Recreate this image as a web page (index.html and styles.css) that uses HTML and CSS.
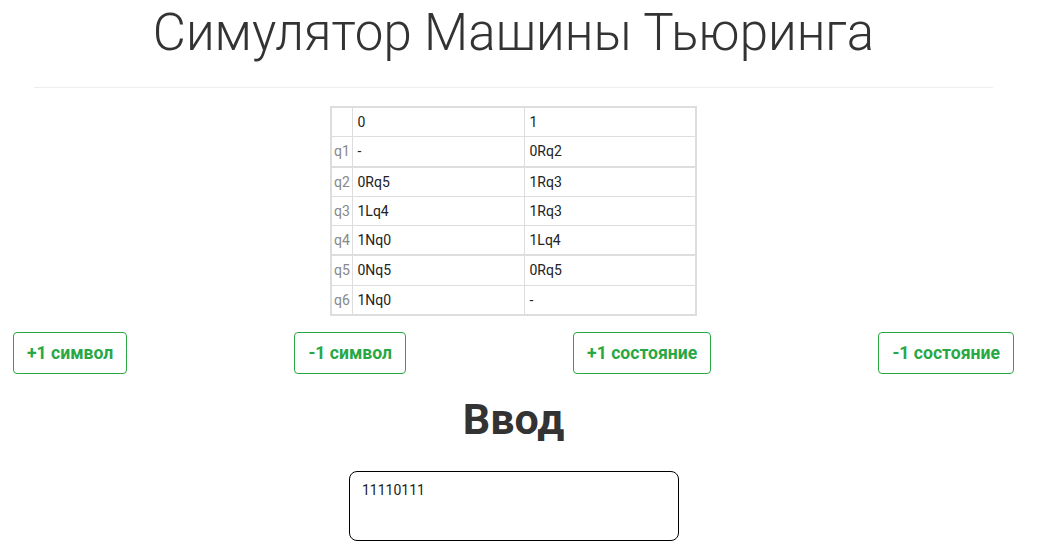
FILE: index.html
```html
<!DOCTYPE html>
<html lang="ru">
<head>
<meta charset="utf-8">
<title>Симулятор Машины Тьюринга</title>
<link rel="stylesheet" href="styles.css">
</head>
<body>
<main class="page">
  <header class="header">
    <h1 class="title">Симулятор Машины Тьюринга</h1>
    <hr class="rule">
  </header>
  <div class="table-wrap">
    <table class="rules">
      <colgroup><col class="c-state"><col class="c-sym"><col class="c-sym"></colgroup>
      <tbody>
        <tr><td class="state"></td><td>0</td><td>1</td></tr>
        <tr><td class="state">q1</td><td>-</td><td>0Rq2</td></tr>
      </tbody>
      <tbody class="group">
        <tr><td class="state">q2</td><td>0Rq5</td><td>1Rq3</td></tr>
        <tr><td class="state">q3</td><td>1Lq4</td><td>1Rq3</td></tr>
        <tr><td class="state">q4</td><td>1Nq0</td><td>1Lq4</td></tr>
      </tbody>
      <tbody class="group">
        <tr><td class="state">q5</td><td>0Nq5</td><td>0Rq5</td></tr>
        <tr><td class="state">q6</td><td>1Nq0</td><td>-</td></tr>
      </tbody>
    </table>
  </div>
  <div class="actions">
    <button class="btn">+1 символ</button>
    <button class="btn">-1 символ</button>
    <button class="btn">+1 состояние</button>
    <button class="btn">-1 состояние</button>
  </div>
  <h2 class="section">Ввод</h2>
  <div class="input-wrap">
    <textarea class="tape">11110111</textarea>
  </div>
</main>
</body>
</html>
```

FILE: styles.css
```css
html, body {
  margin: 0;
  padding: 0;
  background: #fff;
}
body {
  font-family: Roboto, "Liberation Sans", sans-serif;
  color: #333;
}
.page {
  width: 1001px;
  padding: 0 42px 0 13px;
  display: flex;
  flex-direction: column;
}
.header {
  margin: 0 21px;
}
.title {
  margin: 5px 0 0;
  font-size: 51px;
  font-weight: 300;
  line-height: 56px;
  text-align: center;
  color: #333;
}
.rule {
  margin: 26px 0 18px;
  border: 0;
  border-top: 1px solid #eee;
  height: 0;
}
.table-wrap {
  display: flex;
  justify-content: center;
}
.rules {
  border-collapse: collapse;
  table-layout: fixed;
  width: 365px;
  border: 2px solid #ddd;
  font-size: 14px;
  line-height: 20px;
}
.c-state { width: 21px; }
.c-sym { width: 172px; }
.rules td {
  border: 1px solid #ddd;
  padding: 4px 5px 4.3px;
  color: #222;
  height: 20px;
}
.rules td.state {
  padding: 4px 1px 4.3px 2px;
  color: #888;
}
.rules tbody.group {
  border-top: 2px solid #ddd;
}
.actions {
  display: flex;
  justify-content: space-between;
  margin-top: 16px;
}
.btn {
  font-family: Roboto, "Liberation Sans", sans-serif;
  font-size: 17.6px;
  font-weight: 700;
  line-height: 24px;
  padding: 8px 13px;
  color: #28a745;
  background: #fff;
  border: 1px solid #28a745;
  border-radius: 4px;
}
.section {
  margin: 22px 0 0;
  font-size: 43px;
  font-weight: 700;
  line-height: 1.1;
  text-align: center;
  color: #333;
}
.input-wrap {
  display: flex;
  justify-content: center;
  margin-top: 28px;
  padding-left: 1px;
}
.tape {
  box-sizing: border-box;
  width: 330px;
  height: 70px;
  border: 1px solid #000;
  border-radius: 8px;
  padding: 10px 12px;
  font-family: Roboto, "Liberation Sans", sans-serif;
  font-size: 14px;
  line-height: 16px;
  color: #222;
  resize: none;
}
```
